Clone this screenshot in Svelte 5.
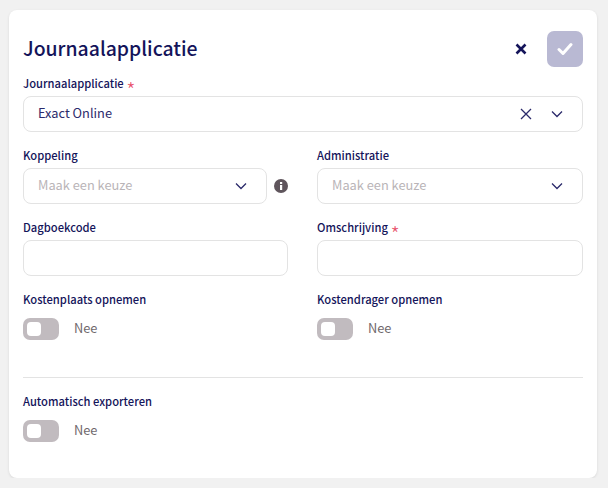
<script>
  let kostenplaats = $state(false);
  let kostendrager = $state(false);
  let automatisch = $state(false);
</script>

{#snippet chevron()}
  <svg class="chev" width="14" height="14" viewBox="0 0 14 14"><path d="M2 4.5 7 9.5 12 4.5" fill="none" stroke="#2b2a6b" stroke-width="1.3"/></svg>
{/snippet}

{#snippet toggle(on)}
  <div class="toggle-row">
    <span class="track"><span class="knob"></span></span>
    <span class="nee">{on ? 'Ja' : 'Nee'}</span>
  </div>
{/snippet}

<main class="card">
  <header class="head">
    <h1>Journaalapplicatie</h1>
    <div class="actions">
      <svg class="close" width="12" height="12" viewBox="0 0 12 12"><path d="M1.5 1.5 10.5 10.5M10.5 1.5 1.5 10.5" stroke="#14145a" stroke-width="2.6"/></svg>
      <span class="confirm">
        <svg width="16" height="14" viewBox="0 0 16 14"><path d="M2 7.5 6 11.5 14 2.5" fill="none" stroke="#fff" stroke-width="3" stroke-linecap="round" stroke-linejoin="round"/></svg>
      </span>
    </div>
  </header>

  <section class="field full">
    <div class="lab">Journaalapplicatie <span class="req">*</span></div>
    <div class="box">
      <span class="val">Exact Online</span>
      <svg class="clear" width="14" height="14" viewBox="0 0 14 14"><path d="M2 2 12 12M12 2 2 12" stroke="#2b2a6b" stroke-width="1.3"/></svg>
      {@render chevron()}
    </div>
  </section>

  <div class="grid">
    <section class="field">
      <div class="lab">Koppeling</div>
      <div class="with-info">
        <div class="box grow">
          <span class="ph">Maak een keuze</span>
          {@render chevron()}
        </div>
        <svg class="info" width="14" height="14" viewBox="0 0 14 14"><circle cx="7" cy="7" r="7" fill="#5f555c"/><rect x="6" y="6" width="2.2" height="5" fill="#fff"/><rect x="6" y="3" width="2.2" height="2" fill="#fff"/></svg>
      </div>
    </section>
    <section class="field">
      <div class="lab">Administratie</div>
      <div class="box">
        <span class="ph">Maak een keuze</span>
        {@render chevron()}
      </div>
    </section>
    <section class="field">
      <div class="lab">Dagboekcode</div>
      <div class="box"></div>
    </section>
    <section class="field">
      <div class="lab">Omschrijving <span class="req">*</span></div>
      <div class="box"></div>
    </section>
    <section class="field">
      <div class="lab">Kostenplaats opnemen</div>
      {@render toggle(kostenplaats)}
    </section>
    <section class="field">
      <div class="lab">Kostendrager opnemen</div>
      {@render toggle(kostendrager)}
    </section>
  </div>

  <hr />

  <section class="field">
    <div class="lab">Automatisch exporteren</div>
    {@render toggle(automatisch)}
  </section>
</main>

<style>
  :global(body) {
    margin: 0;
    background: #f1f1f1;
    font-family: "Noto Sans CJK SC", "Noto Sans", sans-serif;
  }
  .card {
    box-sizing: border-box;
    width: 588px;
    height: 468px;
    margin: 10px 0 0 9px;
    padding: 21px 14px 0;
    background: #fff;
    border-radius: 8px;
    box-shadow: 0 1px 3px rgba(0, 0, 0, 0.1);
  }
  .head {
    display: flex;
    align-items: center;
    justify-content: space-between;
    height: 36px;
  }
  h1 {
    margin: 0 0 4px;
    font-size: 19.4px;
    font-weight: 500;
    color: #14145a;
  }
  .actions {
    display: flex;
    align-items: center;
    gap: 20px;
  }
  .close { display: block; margin-top: -1px; }
  .confirm {
    display: flex;
    align-items: center;
    justify-content: center;
    width: 36px;
    height: 36px;
    border-radius: 7px;
    background: #b9b9d3;
  }
  .field { display: block; }
  .full { margin-top: 8px; }
  .lab {
    height: 21px;
    font-size: 11.2px;
    line-height: 16px;
    font-weight: 500;
    color: #14145a;
  }
  .req {
    color: #e8506a;
    font-size: 21px;
    font-weight: 300;
    line-height: 0;
    position: relative;
    top: 11px;
  }
  .box {
    box-sizing: border-box;
    display: flex;
    align-items: center;
    height: 36px;
    padding: 0 18px 0 14px;
    border: 1px solid #e3e3e3;
    border-radius: 8px;
    background: #fff;
    font-size: 12.8px;
  }
  .val { color: #2b2a6b; flex: 1; margin-bottom: 4px; }
  .ph { color: #b9b4b7; flex: 1; margin-bottom: 4px; }
  .clear { margin-right: 17px; }
  .grid {
    display: grid;
    grid-template-columns: 265px 266px;
    column-gap: 29px;
    row-gap: 15px;
    margin-top: 15px;
  }
  .with-info { display: flex; align-items: center; gap: 7px; }
  .grow { flex: 1; }
  .info { flex: none; }
  .toggle-row {
    display: flex;
    align-items: center;
    gap: 15px;
    height: 22px;
    margin-top: 6px;
  }
  .track {
    display: block;
    box-sizing: border-box;
    width: 36px;
    height: 22px;
    padding: 4px;
    border-radius: 7px;
    background: #c1bbbf;
  }
  .knob {
    display: block;
    width: 14px;
    height: 14px;
    border-radius: 4px;
    background: #fff;
  }
  .nee { font-size: 12.8px; color: #6f686c; margin-bottom: 4px; }
  hr {
    border: 0;
    border-top: 1px solid #e3e3e3;
    margin: 37px 0 15px;
  }
</style>
